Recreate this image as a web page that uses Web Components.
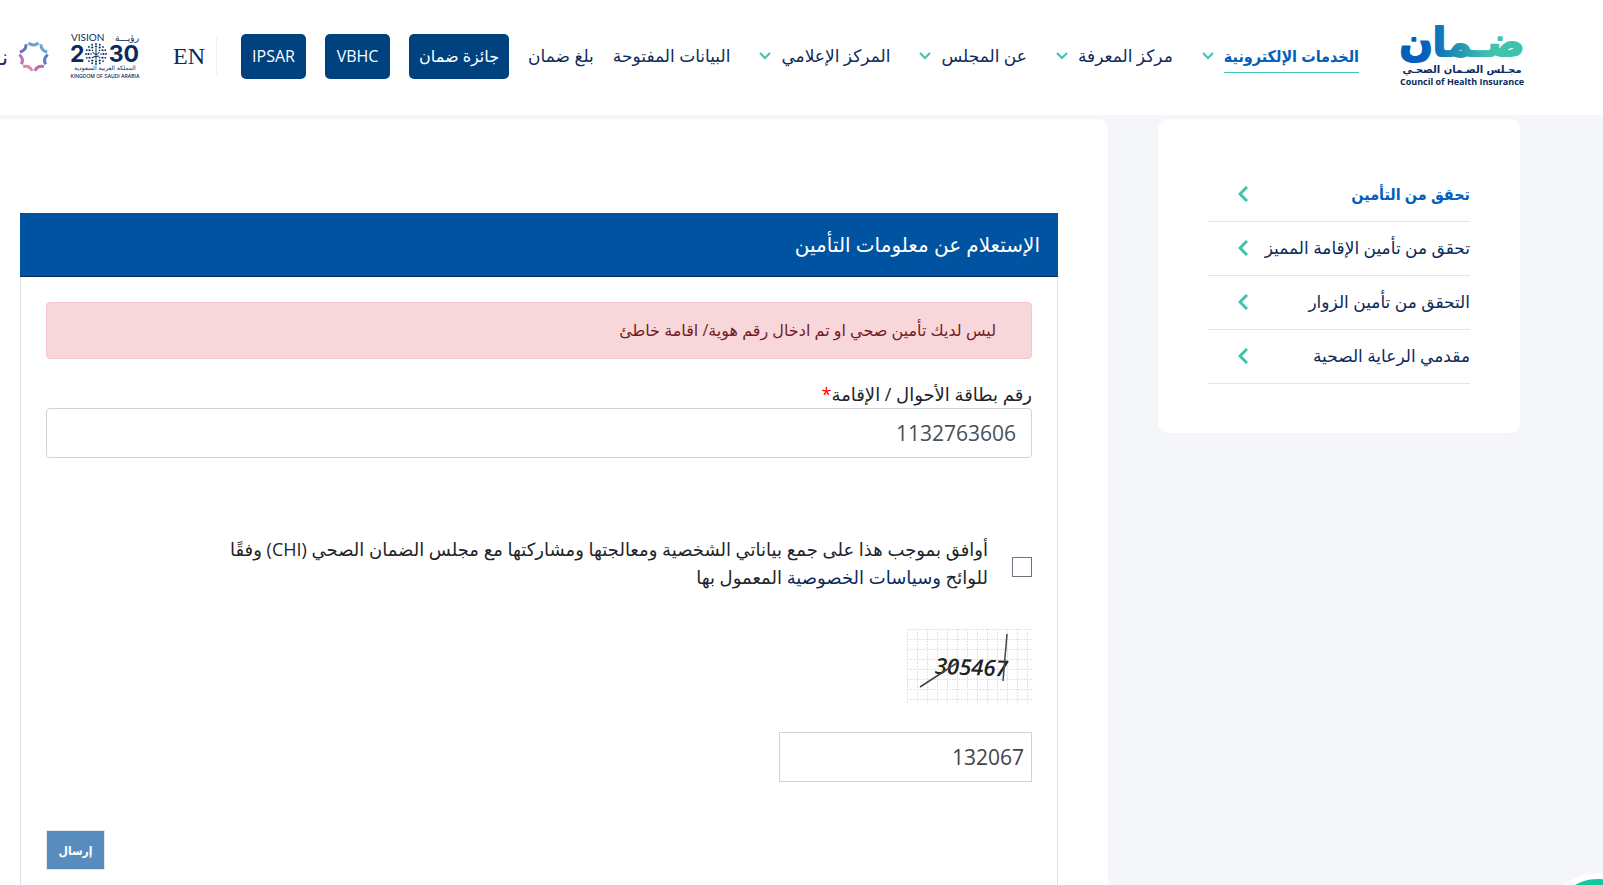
<!DOCTYPE html>
<html lang="ar" dir="rtl">
<head>
<meta charset="utf-8">
<meta name="viewport" content="width=device-width, initial-scale=1">
<title>مجلس الضمان الصحي</title>
<style>
  body {
    margin: 0;
    background: #f4f6fa;
    color: #212529;
    font: 16px/28px "Open Sans", "DejaVu Sans", sans-serif;
  }
</style>
</head>
<body>
<chi-app></chi-app>

<script>
const base = /* css */`
  *, *::before, *::after { box-sizing: border-box; }
  a { color: inherit; text-decoration: none; }
`;

class ChiElement extends HTMLElement {
  connectedCallback() {
    if (this.shadowRoot) return;
    this.attachShadow({ mode: "open" });
    this.shadowRoot.innerHTML = `<style>${base}${this.constructor.styles}</style>${this.template()}`;
  }
}

class ChiLogo extends ChiElement {
  static styles = /* css */`
    :host { display: block; flex: none; }
    svg { display: block; overflow: visible; }
  `;
  template() {
    return /* html */`
    <a href="#" aria-label="Council of Health Insurance">
      <svg width="124" height="66" viewBox="0 0 124 66" direction="rtl">
        <defs>
          <linearGradient id="g" gradientUnits="userSpaceOnUse" x1="0" y1="0" x2="124" y2="0">
            <stop offset=".2" stop-color="#0460ba"/>
            <stop offset=".72" stop-color="#3fc3ae"/>
          </linearGradient>
        </defs>
        <text x="62" y="33" text-anchor="middle" fill="url(#g)" stroke="url(#g)" stroke-width="2" stroke-linejoin="round" font-family="DejaVu Sans" font-weight="700" font-size="39">ضـمان</text>
        <text x="62" y="50" text-anchor="middle" fill="#0b2b5c" font-family="DejaVu Sans" font-weight="700" font-size="10">مجـلس الضـمان الصحـي</text>
        <text x="62" y="62" text-anchor="middle" direction="ltr" fill="#0b2b5c" font-family="Open Sans" font-weight="700" font-size="9">Council of Health Insurance</text>
      </svg>
    </a>`;
  }
}

class ChiVision extends ChiElement {
  static styles = /* css */`
    :host { display: block; flex: none; }
    svg { display: block; }
  `;
  template() {
    let dots = "";
    for (const [r, n, s] of [[5, 8, .8], [7.5, 12, 1.1], [10, 16, .9]]) {
      for (let i = 0; i < n; i++) {
        const a = i * 2 * Math.PI / n;
        dots += `<circle cx="${(26 + r * Math.cos(a)).toFixed(2)}" cy="${(22 + r * Math.sin(a)).toFixed(2)}" r="${s}"/>`;
      }
    }
    return /* html */`
    <svg width="70" height="48" viewBox="0 0 70 48" role="img" aria-label="Vision 2030" fill="#0b2b5c" direction="ltr">
      <text x="1" y="9" font-family="Lato" font-size="10">VISION</text>
      <text x="69" y="9" text-anchor="end" font-family="DejaVu Sans" font-size="9">رؤيـــة</text>
      <text x="0" y="30" font-family="Inter" font-weight="700" font-size="23">2</text>
      <g>${dots}</g>
      <path d="M26 18v8M23 25l6-1M23 20c0 3 6 3 6 0" fill="none" stroke="#0b2b5c"/>
      <text x="69" y="30" text-anchor="end" font-family="Inter" font-weight="700" font-size="23">30</text>
      <text x="35" y="38" text-anchor="middle" font-family="DejaVu Sans" font-size="6">المملكة العربية السعودية</text>
      <text x="35" y="46" text-anchor="middle" font-family="Inter" font-weight="500" font-size="5">KINGDOM OF SAUDI ARABIA</text>
    </svg>`;
  }
}

class ChiNphies extends ChiElement {
  static styles = /* css */`
    :host { display: flex; flex: none; align-items: center; gap: 9px; color: #2f2a6b; font-size: 22px; }
    svg { display: block; }
  `;
  template() {
    // clockwise from the top
    const colors = ["#6d9fd0", "#62a4d8", "#6478c4", "#b56fb0", "#e088a8", "#b876b8", "#6a72c0"];
    const arcs = colors.map((c, i) =>
      `<path d="M11.500 3q5 4 10 0" transform="rotate(${i * 360 / 7} 16.500 16.500)" stroke="${c}"/>`).join("");
    return /* html */`
    <svg width="33" height="33" viewBox="0 0 33 33" fill="none" stroke-width="3" aria-hidden="true">${arcs}</svg>
    <span>نفيس</span>`;
  }
}

class NavItem extends ChiElement {
  static styles = /* css */`
    :host { display: flex; flex: none; align-items: center; gap: 10px; color: #0b2b5c; font-size: 17px; }
    :host([menu]) { margin-inline-end: 10px; }
    :host([active]) { color: #0460ba; font-family: "Open Sans", "DejaVu Sans Condensed", sans-serif; font-size: 16px; font-weight: 700; }
    :host([boxed]) { font-size: 16px; }
    a { line-height: 32px; border-bottom: 1px solid transparent; white-space: nowrap; }
    :host([active]) a { border-color: #3fc3ae; }
    svg { display: none; }
    :host([menu]) svg { display: block; }
    :host([boxed]) a { min-width: 65px; background: #00427f; color: #fff; border: 0; border-radius: 5px; padding: 6px 10px; line-height: 33px; text-align: center; }
  `;
  template() {
    return /* html */`
    <a href="#"><slot></slot></a>
    <svg width="12" height="8" viewBox="0 0 12 8" fill="none" stroke="#3fc3ae" stroke-width="2" aria-hidden="true"><path d="M1 1l5 5 5-5"/></svg>`;
  }
}

class SiteHeader extends ChiElement {
  static styles = /* css */`
    :host { display: block; background: #fff; overflow: hidden; }
    header { display: flex; align-items: center; height: 115px; padding-inline-start: 79px; padding-bottom: 3px; }
    nav { display: flex; flex: none; align-items: center; gap: 19px; margin-inline-start: 41px; }
    .lang { margin-inline-start: 24px; padding-inline-start: 11px; border-inline-start: 1px solid #eceef2;
      font: 24px/36px "Liberation Serif", serif; color: #0b2b5c; }
    chi-vision { margin-inline-start: 33px; }
    chi-nphies { margin-inline-start: 20px; }
  `;
  template() {
    return /* html */`
    <header>
      <chi-logo></chi-logo>
      <nav>
        <nav-item menu active>الخدمات الإلكترونية</nav-item>
        <nav-item menu>مركز المعرفة</nav-item>
        <nav-item menu>عن المجلس</nav-item>
        <nav-item menu>المركز الإعلامي</nav-item>
        <nav-item>البيانات المفتوحة</nav-item>
        <nav-item>بلغ ضمان</nav-item>
        <nav-item boxed>جائزة ضمان</nav-item>
        <nav-item boxed>VBHC</nav-item>
        <nav-item boxed>IPSAR</nav-item>
      </nav>
      <a class="lang" href="#" lang="en">EN</a>
      <chi-vision></chi-vision>
      <chi-nphies></chi-nphies>
    </header>`;
  }
}

class SideLink extends ChiElement {
  static styles = /* css */`
    :host { display: block; color: #0b2b5c; border-bottom: 1px solid #e3e6ea; font-size: 17px; }
    :host([active]) { color: #0460ba; font-family: "Open Sans", "DejaVu Sans Condensed", sans-serif; font-size: 16px; font-weight: 700; }
    a { display: flex; align-items: center; justify-content: space-between; padding: 12px 0 13px; padding-inline-end: 30px; white-space: nowrap; }
    svg { flex: none; }
  `;
  template() {
    return /* html */`
    <a href="#">
      <slot></slot>
      <svg width="10" height="16" viewBox="0 0 10 16" fill="none" stroke="#3fc3ae" stroke-width="3" aria-hidden="true"><path d="M9 1L2 8l7 7"/></svg>
    </a>`;
  }
}

class SideMenu extends ChiElement {
  static styles = /* css */`
    :host { display: block; background: #fff; border-radius: 10px; padding: 49px 50px; }
  `;
  template() {
    return /* html */`
    <nav>
      <side-link active>تحقق من التأمين</side-link>
      <side-link>تحقق من تأمين الإقامة المميز</side-link>
      <side-link>التحقق من تأمين الزوار</side-link>
      <side-link>مقدمي الرعاية الصحية</side-link>
    </nav>`;
  }
}

class AlertBox extends ChiElement {
  static styles = /* css */`
    :host { display: block; background: #f8d7da; border: 1px solid #f5c6cb; border-radius: 4px; color: #721c24; padding: 13px 35px 14px; }
  `;
  template() {
    return `<div role="alert"><slot></slot></div>`;
  }
}

class CaptchaImage extends ChiElement {
  static styles = /* css */`
    :host { display: block; }
    svg { display: block; }
  `;
  template() {
    let grid = "";
    for (let x = 0; x <= 120; x += 10) grid += `M${x + .5} 0V74`;
    for (let y = 0; y <= 70; y += 10) grid += `M0 ${y + .5}H125`;
    return /* html */`
    <svg width="125" height="74" viewBox="0 0 125 74" direction="ltr">
      <path d="${grid}" stroke="#e2e2e2" stroke-dasharray="2 1" fill="none"/>
      <text x="28" y="46" font-family="Open Sans" font-style="italic" font-weight="600" font-size="22" fill="#222" transform="rotate(2 62 38)">305467</text>
      <path d="M13 58L50 34M100 5L96 52" stroke="#444" stroke-width="1.500" fill="none"/>
    </svg>`;
  }
}

class InsuranceForm extends ChiElement {
  static styles = /* css */`
    :host { display: flex; flex-direction: column; }
    h1 { margin: 0; background: #0053a0; border-bottom: 1px solid #0b2b5c; color: #fff; font-size: 20px; font-weight: 400; line-height: 63px; padding: 0 18px; }
    form { flex: 1; display: flex; flex-direction: column; border: solid #dee2e6; border-width: 0 1px; padding: 25px 25px 16px; }
    .field { margin-top: 22px; }
    .field label { display: block; font-size: 18px; line-height: 27px; }
    .required { color: #f00; }
    input[type=text] { display: block; width: 100%; height: 50px; margin: 0; background: #fff; border: 1px solid #ced4da; border-radius: 4px; padding: 0 15px;
      color: #495057; font: 21px "Open Sans", sans-serif; }
    .consent { display: flex; align-items: center; gap: 24px; margin-top: 77px; }
    .consent input { appearance: none; flex: none; width: 20px; height: 20px; margin: 8px 0 0; border: 1px solid #6b7280; background: #fff; }
    .consent label { max-width: 780px; font-size: 18px; }
    .consent a { color: #0b2b5c; }
    captcha-image { margin-top: 38px; }
    input.code { width: 253px; margin-top: 29px; border-color: #cfd1d8; border-radius: 0; padding: 0 7px; color: #444; }
    button { align-self: flex-end; width: 59px; height: 40px; margin-top: 48px; border: 1px solid #e6e6e6; background: #588cbf; color: #fff;
      font: 700 12px "Open Sans", "DejaVu Sans Condensed", sans-serif; padding: 0; }
  `;
  template() {
    return /* html */`
    <h1>الإستعلام عن معلومات التأمين</h1>
    <form>
      <alert-box>ليس لديك تأمين صحي او تم ادخال رقم هوية/ اقامة خاطئ</alert-box>
      <div class="field">
        <label for="id-number">رقم بطاقة الأحوال / الإقامة<span class="required">*</span></label>
        <input type="text" id="id-number" inputmode="numeric" value="1132763606">
      </div>
      <div class="consent">
        <input type="checkbox" id="agree">
        <label for="agree">أوافق بموجب هذا على جمع بياناتي الشخصية ومعالجتها ومشاركتها مع مجلس الضمان الصحي (CHI) وفقًا للوائح <a href="#">وسياسات الخصوصية</a> المعمول بها</label>
      </div>
      <captcha-image></captcha-image>
      <input class="code" type="text" aria-label="رمز التحقق" value="132067">
      <button type="button">إرسال</button>
    </form>`;
  }
}

class ChatBubble extends ChiElement {
  static styles = /* css */`
    :host { position: fixed; right: -48px; bottom: -94px; }
    button { display: block; width: 106px; height: 106px; border: 6px solid #fff; border-radius: 50%; background: #10c8a0; padding: 0; }
  `;
  template() {
    return `<button type="button" aria-label="المحادثة"></button>`;
  }
}

class ChiApp extends ChiElement {
  static styles = /* css */`
    :host { display: flex; flex-direction: column; min-height: 100vh; }
    main { flex: 1; display: flex; gap: 50px; padding-top: 4px; padding-inline-start: 83px; }
    side-menu { flex: 0 0 362px; align-self: flex-start; }
    section { flex: 1; min-width: 0; display: flex; background: #fff; border-start-start-radius: 10px; padding: 94px 50px 0 20px; }
    insurance-form { flex: 1; min-width: 0; }
  `;
  template() {
    return /* html */`
    <site-header></site-header>
    <main>
      <side-menu></side-menu>
      <section><insurance-form></insurance-form></section>
    </main>
    <chat-bubble></chat-bubble>`;
  }
}

customElements.define("chi-logo", ChiLogo);
customElements.define("chi-vision", ChiVision);
customElements.define("chi-nphies", ChiNphies);
customElements.define("nav-item", NavItem);
customElements.define("site-header", SiteHeader);
customElements.define("side-link", SideLink);
customElements.define("side-menu", SideMenu);
customElements.define("alert-box", AlertBox);
customElements.define("captcha-image", CaptchaImage);
customElements.define("insurance-form", InsuranceForm);
customElements.define("chat-bubble", ChatBubble);
customElements.define("chi-app", ChiApp);
</script>
</body>
</html>
